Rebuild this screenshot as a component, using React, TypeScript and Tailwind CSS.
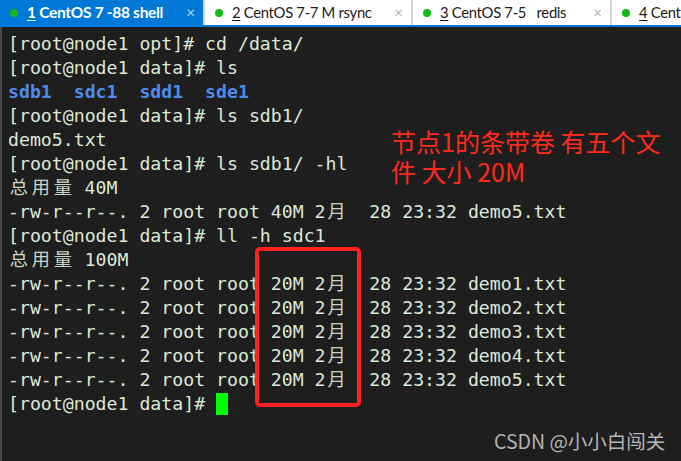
import React from 'react';

type Seg = { t: string; blue?: boolean };

const lines: Seg[][] = [
  [{ t: '[root@node1 opt]# cd /data/' }],
  [{ t: '[root@node1 data]# ls' }],
  [{ t: 'sdb1  sdc1  sdd1  sde1', blue: true }],
  [{ t: '[root@node1 data]# ls sdb1/' }],
  [{ t: 'demo5.txt' }],
  [{ t: '[root@node1 data]# ls sdb1/ -hl' }],
  [{ t: '总用量 40M' }],
  [{ t: '-rw-r--r--. 2 root root 40M 2月  28 23:32 demo5.txt' }],
  [{ t: '[root@node1 data]# ll -h sdc1' }],
  [{ t: '总用量 100M' }],
  [{ t: '-rw-r--r--. 2 root root 20M 2月  28 23:32 demo1.txt' }],
  [{ t: '-rw-r--r--. 2 root root 20M 2月  28 23:32 demo2.txt' }],
  [{ t: '-rw-r--r--. 2 root root 20M 2月  28 23:32 demo3.txt' }],
  [{ t: '-rw-r--r--. 2 root root 20M 2月  28 23:32 demo4.txt' }],
  [{ t: '-rw-r--r--. 2 root root 20M 2月  28 23:32 demo5.txt' }],
];

// CJK glyphs take two terminal cells
const TermText = ({ text }: { text: string }) => {
  const parts = text.split(/([\u4e00-\u9fff])/);
  return (
    <>
      {parts.map((p, i) =>
        /^[\u4e00-\u9fff]$/.test(p) ? (
          <span key={i} className="inline-block w-[2ch] text-center opacity-90">
            {p}
          </span>
        ) : (
          <React.Fragment key={i}>{p}</React.Fragment>
        )
      )}
    </>
  );
};

const Tab = ({
  num,
  label,
  active,
  width,
}: {
  num: string;
  label: string;
  active?: boolean;
  width: string;
}) => (
  <div
    className={`flex items-center h-full shrink-0 pl-[10px] pr-[8px] ${width} ${
      active
        ? 'bg-[#0078d7] text-white font-bold text-[15.5px]'
        : 'bg-white text-[#1a1a1a] text-[14.8px]'
    }`}
  >
    <span className="w-[8px] h-[8px] rounded-full bg-[#16b816] shrink-0" />
    <span className="ml-[9px] whitespace-pre tracking-[-0.3px]">
      <span className="underline underline-offset-2">{num}</span> {label}
    </span>
    <span
      className={`ml-auto text-[15px] font-normal ${active ? 'text-[#b9d7f2]' : 'text-[#b5b5b5]'}`}
    >
      ×
    </span>
  </div>
);

const Sep = () => <div className="w-[2px] h-full bg-[#d4d4d4] shrink-0" />;

export default function App() {
  return (
    <div className="w-[681px] h-[461px] overflow-hidden bg-[#1e1e1e] flex flex-col">
      {/* Tabs */}
      <div
        className="h-[27px] flex bg-white border-b-2 border-[#0078d7] overflow-hidden"
        style={{ fontFamily: 'Lato, "Noto Sans", sans-serif' }}
      >
        <Tab num="1" label="CentOS 7 -88 shell" active width="w-[203px]" />
        <Sep />
        <Tab num="2" label="CentOS 7-7 M rsync" width="w-[206px]" />
        <Sep />
        <Tab num="3" label="CentOS 7-5   redis" width="w-[197px]" />
        <Sep />
        <Tab num="4" label="CentOS 7-6" width="w-[120px]" />
      </div>

      {/* Terminal */}
      <div className="relative flex-1 border-l-2 border-[#4a4a4a] pl-[6px] pt-[5px]">
        <div
          className="text-[18.2px] leading-[24px] text-[#dde8d8] whitespace-pre"
          style={{ fontFamily: '"DejaVu Sans Mono", "Noto Sans CJK SC", monospace' }}
        >
          {lines.map((segs, i) => (
            <div key={i} className="w-fit">
              {segs.map((s, j) =>
                s.blue ? (
                  <span key={j} className="text-[#4d8cec] font-bold">
                    {s.t}
                  </span>
                ) : (
                  <TermText key={j} text={s.t} />
                )
              )}
            </div>
          ))}
          <div className="flex items-center">
            <span>[root@node1 data]# </span>
            <span className="inline-block w-[12px] h-[22px] bg-[#00ff00]" />
          </div>
        </div>

        {/* Annotation */}
        <div
          className="absolute left-[389px] top-[99px] text-[25px] leading-[30px] text-[#ff2a1c]"
          style={{ fontFamily: '"Noto Sans CJK SC", sans-serif' }}
        >
          <div>节点1的条带卷 有五个文</div>
          <div>件 大小 20M</div>
        </div>
        <div className="absolute left-[253px] top-[220px] w-[106px] h-[160px] border-[4px] border-[#ff2020] rounded-[5px]" />

        {/* Watermark */}
        <div
          className="absolute left-[492px] top-[401px] text-[19.5px] leading-[26px] text-[#b4b4b4]"
          style={{ fontFamily: '"Noto Sans CJK SC", sans-serif' }}
        >
          CSDN @小小白闯关
        </div>
      </div>
    </div>
  );
}
